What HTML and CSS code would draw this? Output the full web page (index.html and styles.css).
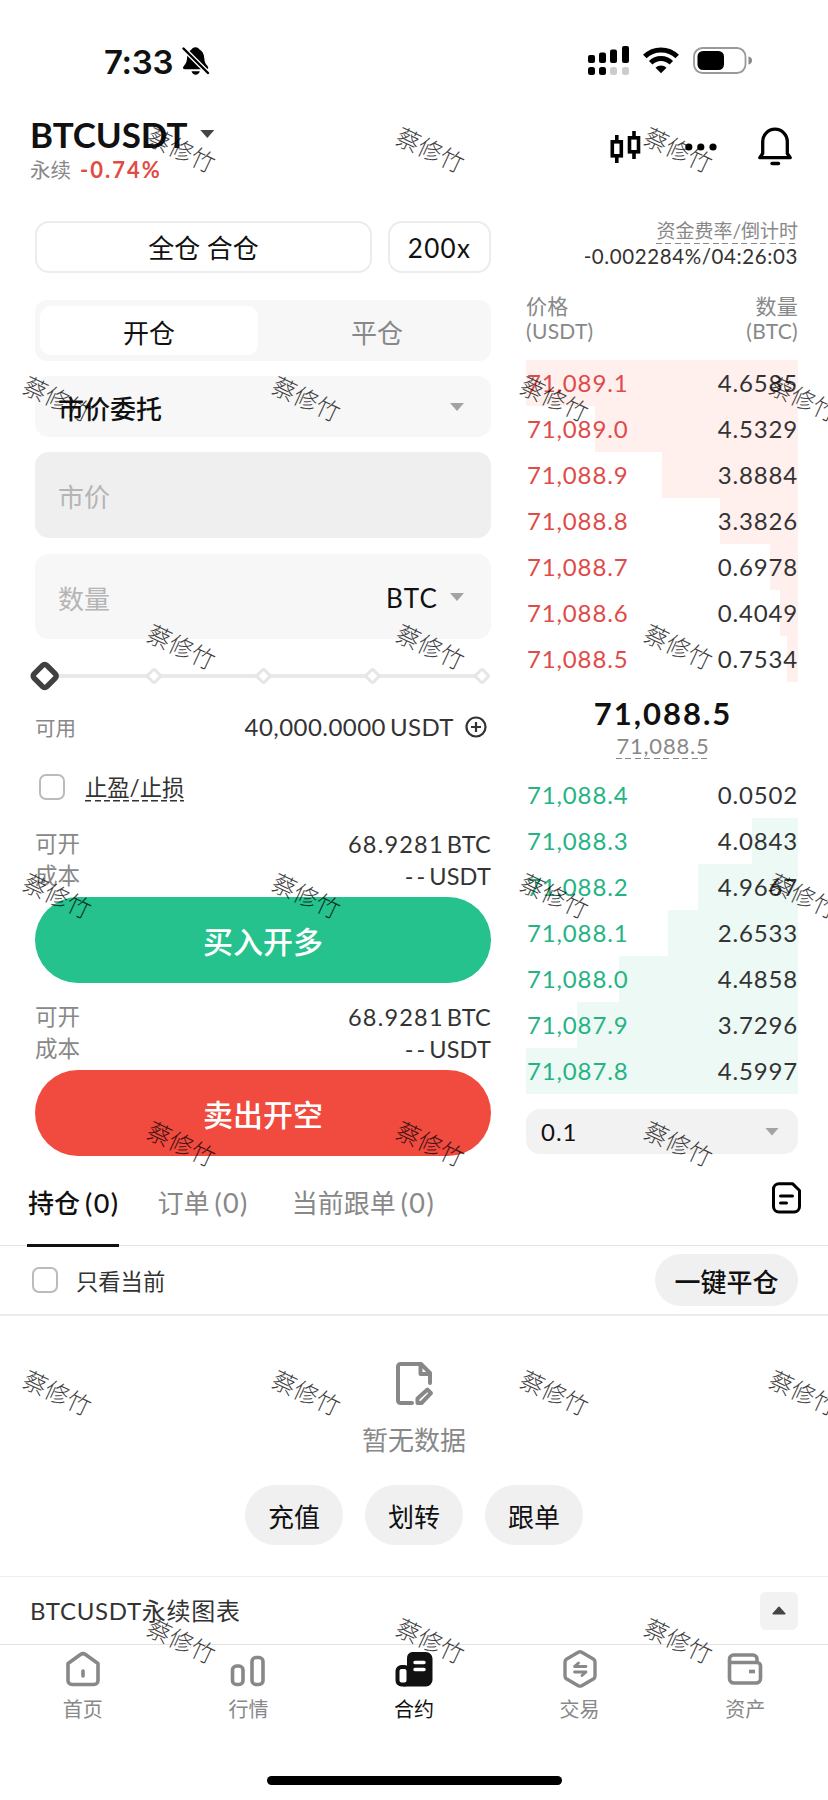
FILE: index.html
```html
<!DOCTYPE html>
<html lang="zh-CN">
<head>
<meta charset="utf-8">
<title>BTCUSDT 永续</title>
<link rel="stylesheet" href="styles.css">
</head>
<body>
<div class="screen">
  <header class="status">
    <div class="status-left">
      <span class="clock">7:33</span>
      <svg width="28" height="30" viewBox="0 0 28 30"><path d="M13.500 1.200c-2.200 0-3.400 1-4 2.300C6.500 5 5.200 8.500 5 12.500 4.800 16.500 3.500 18 1.800 20c-1.500 1.700-.8 3.300 1 3.300H24.500c1.800 0 2.400-1.600 1-3.300-1.800-2-3-3.500-3.200-7.500-.2-4-1.700-7.500-4.800-9-.6-1.300-1.800-2.300-4-2.300z"/><path d="M9.500 25.200h8.300c-.6 2.300-2.100 3.500-4.100 3.500s-3.600-1.200-4.200-3.500z"/><path d="M-1 0L27 28" stroke="#fff" stroke-width="5"/><path d="M1.500 2.500L26 27" stroke="#000" stroke-width="2.400" stroke-linecap="round"/></svg>
    </div>
    <div class="status-right">
      <svg width="42" height="30" viewBox="0 0 42 30"><rect x="0" y="9" width="7" height="8" rx="2"/><rect x="11" y="6.500" width="7" height="10.500" rx="2"/><rect x="22" y="3.500" width="7" height="13.500" rx="2"/><rect x="34" y="0" width="7" height="17" rx="2"/><rect x="0" y="21" width="7" height="8" rx="2.500"/><rect x="11" y="21" width="7" height="8" rx="2.500"/><g fill="#ccc"><rect x="22" y="21" width="7" height="8" rx="2.500"/><rect x="34" y="21" width="7" height="8" rx="2.500"/></g></svg>
      <svg class="wifi" width="36" height="27" viewBox="0 0 36 27"><g fill="none" stroke="#000" stroke-width="5"><path d="M1.800 9.600a23 23 0 0 1 32.400 0"/><path d="M7.700 15.700a14.600 14.600 0 0 1 20.600 0"/></g><path d="M12.500 20.800a7.800 7.800 0 0 1 11 0L18 26.300z"/></svg>
      <svg class="battery" width="60" height="27" viewBox="0 0 60 27"><rect x="1" y="1" width="51.500" height="25" rx="8.500" fill="none" stroke="#999" stroke-width="1.800"/><rect x="4.500" y="4" width="26.500" height="19" rx="5.500"/><path d="M55.500 9.500q3.500.8 3.500 4t-3.500 4z" fill="#888"/></svg>
    </div>
  </header>

  <div class="pair">
    <div class="pair-info">
      <div class="pair-name"><b>BTCUSDT</b><i class="caret dark"></i></div>
      <div class="pair-sub"><span>永续</span><b>-0.74%</b></div>
    </div>
    <div class="pair-icons">
      <svg width="31" height="33" viewBox="0 0 31 33"><g fill="none" stroke="#000" stroke-width="3.600"><rect x="2.300" y="10.800" width="9" height="14"/><path d="M6.800 4v7M6.800 25v7"/><rect x="19.500" y="6.800" width="9" height="14"/><path d="M24 0v7M24 21v7"/></g></svg>
      <svg class="dots" width="32" height="8" viewBox="0 0 32 8"><circle cx="3.800" cy="4" r="3.600"/><circle cx="15.800" cy="4" r="3.600"/><circle cx="28" cy="4" r="3.600"/></svg>
      <svg class="bell" width="34" height="39" viewBox="0 0 34 39"><path d="M4.700 26.500V14.500a12.300 12.300 0 0 1 24.600 0v12l2.900 4.200H1.800z" fill="none" stroke="#000" stroke-width="3.300" stroke-linejoin="round"/><path d="M14 36.500h6.500" stroke="#000" stroke-width="3.300" stroke-linecap="round"/></svg>
    </div>
  </div>

  <main class="trade">
    <section class="order">
      <div class="modes"><div class="outline wide">全仓 合仓</div><div class="outline">200x</div></div>
      <div class="side-tabs"><span class="on">开仓</span><span>平仓</span></div>
      <div class="field type"><span>市价委托</span><i class="caret"></i></div>
      <div class="field price"><span>市价</span></div>
      <div class="field amount"><span>数量</span><em>BTC</em><i class="caret"></i></div>
      <svg class="slider" width="470" height="74" viewBox="-9 0 470 74"><path d="M10 37H447" stroke="#e9e9e9" stroke-width="4"/><g fill="#fff" stroke="#e6e6e6" stroke-width="3"><rect x="-5" y="-5" width="10" height="10" rx="2" transform="translate(119 37) rotate(45)"/><rect x="-5" y="-5" width="10" height="10" rx="2" transform="translate(228.500 37) rotate(45)"/><rect x="-5" y="-5" width="10" height="10" rx="2" transform="translate(337.500 37) rotate(45)"/><rect x="-5" y="-5" width="10" height="10" rx="2" transform="translate(447 37) rotate(45)"/></g><rect x="-9" y="-9" width="18" height="18" rx="3" transform="translate(9.700 37) rotate(45)" fill="#fff" stroke="#404040" stroke-width="5.500"/></svg>
      <div class="avail"><span>可用</span><em>40,000.0000<small>USDT</small></em><svg width="22" height="22" viewBox="0 0 22 22"><g fill="none" stroke="#333" stroke-width="2.200"><circle cx="11" cy="11" r="9.500"/><path d="M6 11h10M11 6v10"/></g></svg></div>
      <div class="tpsl"><i class="check"></i><span class="dash">止盈/止损</span></div>
      <dl class="facts"><dt>可开</dt><dd class="num">68.9281<small>BTC</small></dd><dt>成本</dt><dd class="none">--<small>USDT</small></dd></dl>
      <div class="action buy">买入开多</div>
      <dl class="facts second"><dt>可开</dt><dd class="num">68.9281<small>BTC</small></dd><dt>成本</dt><dd class="none">--<small>USDT</small></dd></dl>
      <div class="action sell">卖出开空</div>
    </section>

    <section class="book">
      <div class="fund-label"><span class="dash">资金费率/倒计时</span></div>
      <div class="fund-value">-0.002284%/04:26:03</div>
      <div class="book-head"><span>价格<br>(USDT)</span><span>数量<br>(BTC)</span></div>
      <div class="rows asks">
        <div style="--depth:272px"><b>71,089.1</b><span>4.6585</span></div>
        <div style="--depth:203px"><b>71,089.0</b><span>4.5329</span></div>
        <div style="--depth:136px"><b>71,088.9</b><span>3.8884</span></div>
        <div style="--depth:78px"><b>71,088.8</b><span>3.3826</span></div>
        <div style="--depth:28px"><b>71,088.7</b><span>0.6978</span></div>
        <div style="--depth:18px"><b>71,088.6</b><span>0.4049</span></div>
        <div style="--depth:11px"><b>71,088.5</b><span>0.7534</span></div>
      </div>
      <div class="last"><b>71,088.5</b><span class="dash">71,088.5</span></div>
      <div class="rows bids">
        <div style="--depth:0px"><b>71,088.4</b><span>0.0502</span></div>
        <div style="--depth:46px"><b>71,088.3</b><span>4.0843</span></div>
        <div style="--depth:100px"><b>71,088.2</b><span>4.9667</span></div>
        <div style="--depth:130px"><b>71,088.1</b><span>2.6533</span></div>
        <div style="--depth:179px"><b>71,088.0</b><span>4.4858</span></div>
        <div style="--depth:221px"><b>71,087.9</b><span>3.7296</span></div>
        <div style="--depth:272px"><b>71,087.8</b><span>4.5997</span></div>
      </div>
      <div class="step"><span>0.1</span><i class="caret"></i></div>
    </section>
  </main>

  <nav class="pos-tabs">
    <span class="on">持仓<small>(0)</small></span><span>订单<small>(0)</small></span><span class="copy">当前跟单<small>(0)</small></span>
    <svg width="30" height="32" viewBox="0 0 30 32"><g fill="none" stroke="#000" stroke-width="3" stroke-linejoin="round" stroke-linecap="round"><path d="M7 1.700H20.500L27.500 8.500V24.500a5.500 5.500 0 0 1-5.500 5.500H7a5.500 5.500 0 0 1-5.500-5.500V7.200A5.500 5.500 0 0 1 7 1.700z"/><path d="M8.500 14h12M8.500 21h6"/></g></svg>
  </nav>
  <div class="filter"><i class="check"></i><span>只看当前</span><div class="pill">一键平仓</div></div>

  <section class="empty">
    <svg width="40" height="45" viewBox="0 0 40 45"><g fill="none" stroke="#888" stroke-width="4" stroke-linejoin="round" stroke-linecap="round"><path d="M18 42H6.500a2.500 2.500 0 0 1-2.500-2.500V5.500A2.500 2.500 0 0 1 6.500 3H27l9 9v10"/><path d="M26.500 3v10H36"/><path d="M23.500 37.500L33.500 28.500L37 32.200L27.500 42H23.500z"/></g></svg>
    <p>暂无数据</p>
    <div class="pills"><div class="pill">充值</div><div class="pill">划转</div><div class="pill">跟单</div></div>
  </section>

  <div class="chart-bar"><span>BTCUSDT永续图表</span><div class="toggle"><svg width="14" height="9" viewBox="0 0 14 9"><path d="M7 1.200L12.800 7.800H1.200z" fill="#444" stroke="#444" stroke-width="1.500" stroke-linejoin="round"/></svg></div></div>

  <nav class="tabbar">
    <div><svg width="36" height="38" viewBox="0 0 36 38"><g fill="none" stroke="#888" stroke-width="3.600" stroke-linecap="round" stroke-linejoin="round"><path d="M3 13.500L15.500 4.500q2.500-1.600 5 0L33 13.500V30.500a4 4 0 0 1-4 4H7a4 4 0 0 1-4-4z"/><path d="M18 21v5"/></g></svg><span>首页</span></div>
    <div><svg width="36" height="38" viewBox="0 0 36 38"><g fill="none" stroke="#888" stroke-width="3.600"><rect x="2.500" y="16" width="10.500" height="18.500" rx="4"/><rect x="22" y="7.500" width="11" height="27" rx="4"/></g></svg><span>行情</span></div>
    <div class="on"><svg width="38" height="38" viewBox="0 0 38 38"><rect x="2.500" y="17" width="11" height="17.500" rx="4" fill="none" stroke="#111" stroke-width="4"/><path d="M17 2H31a6.500 6.500 0 0 1 6.500 6.500V30a6.500 6.500 0 0 1-6.500 6.500H8q4-2 4-6V8.500A6.500 6.500 0 0 1 17 2z" fill="#111"/><path d="M20 12.500h9M20 19.500h9" stroke="#fff" stroke-width="3.500" stroke-linecap="round"/></svg><span>合约</span></div>
    <div><svg width="36" height="38" viewBox="0 0 36 38"><g fill="none" stroke="#888" stroke-width="3.400" stroke-linejoin="round" stroke-linecap="round"><path d="M16.300 2.200q1.700-.9 3.400 0L31.300 9q1.700 1 1.700 3V26q0 2-1.700 3L19.700 35.700q-1.700.9-3.400 0L4.700 29Q3 28 3 26V12q0-2 1.700-3z"/><path d="M24 16.500H12.500l4-3.500M12.500 22H24l-4 3.500" stroke-width="2.800"/></g></svg><span>交易</span></div>
    <div><svg width="36" height="38" viewBox="0 0 36 38"><g fill="none" stroke="#888" stroke-width="3.600" stroke-linejoin="round"><path d="M2.500 12.500V9a4 4 0 0 1 4-4H26a4 4 0 0 1 4 4v3.500"/><path d="M2.500 12.500H30a3.500 3.500 0 0 1 3.500 3.500V28.500a4.500 4.500 0 0 1-4.500 4.500H7a4.500 4.500 0 0 1-4.500-4.500z"/><path d="M22 21.500h6"/></g></svg><span>资产</span></div>
  </nav>
  <div class="home-bar"></div>

  <div class="marks">
    <div class="mark-row a"><span>蔡修竹</span><span>蔡修竹</span><span>蔡修竹</span></div>
    <div class="mark-row"><span>蔡修竹</span><span>蔡修竹</span><span>蔡修竹</span><span>蔡修竹</span></div>
    <div class="mark-row a"><span>蔡修竹</span><span>蔡修竹</span><span>蔡修竹</span></div>
    <div class="mark-row"><span>蔡修竹</span><span>蔡修竹</span><span>蔡修竹</span><span>蔡修竹</span></div>
    <div class="mark-row a"><span>蔡修竹</span><span>蔡修竹</span><span>蔡修竹</span></div>
    <div class="mark-row"><span>蔡修竹</span><span>蔡修竹</span><span>蔡修竹</span><span>蔡修竹</span></div>
    <div class="mark-row a"><span>蔡修竹</span><span>蔡修竹</span><span>蔡修竹</span></div>
  </div>
</div>
</body>
</html>
```
FILE: styles.css
```css
* { box-sizing: border-box; }
body { margin: 0; background: #fff; color: #111; font-family: Lato, "Noto Sans CJK SC", sans-serif; font-size: 26px; }
svg { display: block; flex: none; }
em, i { font-style: normal; }
p, dl, dd { margin: 0; }
.screen { position: relative; width: 828px; height: 1800px; overflow: hidden; background: #fff; }

.status { height: 100px; display: flex; justify-content: space-between; padding: 46px 75px 0 104px; }
.status-left, .status-right { display: flex; align-items: flex-start; }
.clock { font: 600 33px/32px Inter, sans-serif; width: 78px; letter-spacing: -.3px; }
.wifi { margin: 1px 0 0 13px; }
.battery { margin: 1px 0 0 14px; }

.pair { height: 121px; display: flex; justify-content: space-between; padding: 14px 36px 0 30px; }
.pair-name { display: flex; align-items: center; height: 40px; font-size: 35px; letter-spacing: -.1px; }
.pair-sub { display: flex; gap: 9px; height: 32px; line-height: 32px; font-size: 20.500px; color: #888; }
.pair-sub b { color: #e24b44; font-size: 22px; letter-spacing: 2px; }
.caret { width: 14px; height: 8px; background: #a3a3a3; clip-path: polygon(0 0, 100% 0, 50% 100%); }
.caret.dark { background: #444; margin-left: 13px; }
.pair-icons { display: flex; align-items: flex-start; padding-top: 17px; }
.dots { margin: 11.500px 0 0 44px; }
.bell { margin: -4px 0 0 41px; }

.trade { display: grid; grid-template-columns: 456px 272px; gap: 35px; padding-left: 35px; height: 936px; }
.modes { display: flex; gap: 16px; height: 52px; margin-bottom: 27px; }
.outline { width: 103px; border: 2px solid #ececec; border-radius: 14px; text-align: center; line-height: 50px; letter-spacing: 1.300px; }
.outline.wide { width: 337px; letter-spacing: 0; }
.side-tabs { display: flex; height: 61px; padding: 6px 5px; background: #f7f7f7; border-radius: 12px; margin-bottom: 15px; color: #888; }
.side-tabs span { flex: 1; padding-left: 10px; text-align: center; line-height: 55px; }
.side-tabs .on { flex: 0 0 218px; padding: 0; background: #fff; border-radius: 11px; color: #111; }
.field { display: flex; align-items: center; height: 86px; padding: 0 27px 0 23px; border-radius: 14px; background: #f7f7f7; color: #b5b5b5; }
.field span { flex: 1; }
.field em { color: #111; margin: 2px 12px 0 0; letter-spacing: 1.200px; }
.type { height: 61px; color: #111; margin-bottom: 15px; padding-top: 2px; font-weight: 500; }
.type .caret { margin-top: -1px; }
.price { background: #efefef; margin-bottom: 16px; }
.amount { height: 85px; padding-top: 1px; }
.slider { margin-left: -9px; }
.avail { display: flex; align-items: center; height: 28px; padding-right: 4px; font-size: 20.500px; color: #888; margin-bottom: 21px; }
.avail em { margin: -1px 11px 0 auto; font-size: 24px; color: #333; letter-spacing: .45px; }
.avail small { font-size: 24px; margin-left: 4px; }
.tpsl { display: flex; align-items: center; height: 50px; padding-left: 4px; gap: 20px; font-size: 22.300px; color: #333; margin-bottom: 16px; }
.check { flex: none; width: 26px; height: 26px; border: 2px solid #bbb; border-radius: 7px; background: #fff; }
.dash { background: repeating-linear-gradient(90deg, currentColor 0 6px, transparent 6px 9.500px) bottom / 100% 1.500px no-repeat; }
.tpsl .dash { line-height: 28px; margin-top: 1px; }
.facts { display: grid; grid-template-columns: auto 1fr; grid-auto-rows: 32px; line-height: 32px; font-size: 22.500px; color: #888; margin-bottom: 5px; }
.facts dd { text-align: right; color: #333; font-size: 23.500px; }
.facts small { font-size: 23.500px; letter-spacing: .2px; margin-left: 3px; }
.facts .num { letter-spacing: 1.200px; }
.facts .none { letter-spacing: 3px; }
.facts .none small { margin-left: 1px; }
.facts.second { margin: 18px 0 4.500px; }
.action { height: 86px; border-radius: 43px; color: #fff; font-size: 30px; font-weight: 500; line-height: 88px; text-align: center; }
.buy { background: #25c28d; }
.sell { background: #f14b40; }

.fund-label { text-align: right; font-size: 19px; line-height: 20px; height: 22px; color: #888; }
.fund-label .dash { display: inline-block; height: 22px; line-height: 18px; }
.fund-value { text-align: right; font-size: 20.500px; height: 28px; line-height: 27px; color: #333; margin-bottom: 22px; letter-spacing: .6px; }
.book-head { display: flex; justify-content: space-between; height: 67px; font-size: 21px; line-height: 25px; color: #888; letter-spacing: .3px; }
.book-head span + span { text-align: right; }
.rows div { display: flex; justify-content: space-between; height: 46px; line-height: 46px; font-size: 24px; letter-spacing: .85px; padding-left: 1px; color: #333; background: linear-gradient(var(--tint), var(--tint)) right / var(--depth) 100% no-repeat; }
.rows b { font-weight: 400; color: var(--tone); }
.asks { --tint: #fff0ee; --tone: #e04a48; }
.bids { --tint: #edf9f5; --tone: #25b384; }
.last { display: flex; flex-direction: column; align-items: center; height: 89.500px; padding-top: 12px; color: #888; }
.last b { font-size: 31px; line-height: 38px; color: #111; letter-spacing: 2px; padding-left: 2px; }
.last span { font-size: 22px; line-height: 27px; height: 27px; letter-spacing: .8px; margin-left: 2px; }
.step { display: flex; align-items: center; justify-content: space-between; height: 45px; margin-top: 15.500px; padding: 0 19px 0 15px; font-size: 24px; letter-spacing: 1px; border-radius: 14px; background: #f2f2f2; }

.pos-tabs { display: flex; height: 89px; padding: 0 26px 0 27px; border-bottom: 1.500px solid #e4e4e4; color: #888; gap: 37px; }
.pos-tabs span { height: 90px; line-height: 92px; padding-left: 1px; }
.pos-tabs small { font-size: 27px; margin-left: 5px; letter-spacing: 1.400px; }
.pos-tabs .copy { margin-left: 5px; }
.pos-tabs .on { color: #111; font-weight: 500; border-bottom: 3px solid #111; }
.pos-tabs svg { margin: 25px 0 0 auto; }
.filter { display: flex; align-items: center; height: 70px; padding: 0 30px 0 32px; border-bottom: 2px solid #ececec; font-size: 22.300px; color: #333; }
.filter > span { margin-left: 18px; padding-bottom: 1px; }
.pill { border-radius: 30px; background: #f0f0f0; color: #111; font-size: 26px; text-align: center; }
.filter .pill { width: 143px; height: 52px; line-height: 56px; margin-left: auto; font-weight: 500; }
.empty { height: 260px; display: flex; flex-direction: column; align-items: center; padding-top: 45px; color: #888; }
.empty p { line-height: 36px; margin-top: 16px; }
.pills { display: flex; gap: 22px; margin-top: 27px; }
.pills .pill { width: 98px; height: 60px; line-height: 64px; }
.chart-bar { display: flex; align-items: center; justify-content: space-between; height: 69px; padding: 0 30px 0 30px; border-top: 1.500px solid #eee; border-bottom: 1.500px solid #e2e2e2; font-size: 24px; letter-spacing: .7px; color: #333; }
.chart-bar span { padding-bottom: 3px; }
.toggle { display: grid; place-items: center; width: 38px; height: 38px; border-radius: 6px; background: #f2f2f2; }
.tabbar { display: grid; grid-template-columns: repeat(5, 1fr); padding-top: 5px; height: 131px; font-size: 20px; color: #888; }
.tabbar div { display: flex; flex-direction: column; align-items: center; }
.tabbar span { line-height: 30px; margin-top: 6px; }
.tabbar .on { color: #111; }
.home-bar { width: 295px; height: 9px; border-radius: 5px; background: #000; margin: 0 auto; }

.marks { position: absolute; left: 0; top: 26px; width: 828px; pointer-events: none; }
.mark-row { display: flex; height: 248.500px; align-items: center; margin-left: -67px; }
.mark-row.a { margin-left: 57px; }
.mark-row span { flex: none; width: 248.500px; text-align: center; font-size: 24px; line-height: 30px; font-weight: 300; color: rgba(0, 0, 0, .75); transform: rotate(25deg); }
```
